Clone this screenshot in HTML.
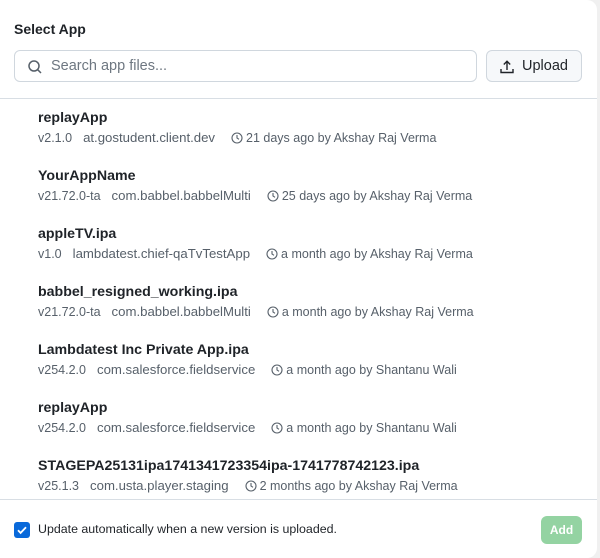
<!DOCTYPE html>
<html><head><style>
*{box-sizing:border-box;margin:0;padding:0}
body{width:600px;height:558px;background:#f0f0f0;font-family:"Liberation Sans",Arial,sans-serif;overflow:hidden}
.card{position:absolute;left:0;top:0;width:597px;height:558px;background:#fff;border-radius:0 10px 10px 0}
.title{position:absolute;left:14px;top:21px;font-size:14px;font-weight:bold;color:#1f2328}
.search{position:absolute;left:14px;top:50px;width:463px;height:32px;border:1px solid #d0d7de;border-radius:6px}
.search span{position:absolute;left:36px;top:7px;font-size:14.5px;color:#6e7781}
.search svg{position:absolute;left:12px;top:8px}
.up{position:absolute;left:486px;top:50px;width:96px;height:32px;border:1px solid #d0d7de;border-radius:6px;background:#f6f8fa;font-size:14.5px;color:#1f2328}
.up span{position:absolute;left:35px;top:7px}
.up svg{position:absolute;left:12px;top:8px}
.hr{position:absolute;left:0;width:597px;height:1px;background:#d8dee4}
.item{position:absolute;left:38px}
.item b{display:block;font-size:14.2px;color:#1f2328;font-weight:bold;line-height:17px}
.meta{margin-top:4px;font-size:12.5px;color:#57606a;white-space:nowrap;line-height:14px;display:flex;align-items:center}
.meta i{font-style:normal;margin-right:11px}
.meta i+i{margin-right:16px;font-size:13.2px}
.meta svg{margin-right:3px}
.cb{position:absolute;left:14px;top:522px;width:16px;height:16px;background:#0969da;border-radius:3px}
.lbl{position:absolute;left:38px;top:522px;font-size:12.4px;color:#1f2328}
.add{position:absolute;left:541px;top:516px;width:41px;height:28px;background:#94d3a2;border-radius:6px;color:#fff;font-size:12px;font-weight:bold;text-align:center;line-height:28px}
</style></head><body><div class="card">
<div class="title">Select App</div>
<div class="search"><svg width="16" height="16" viewBox="0 0 16 16" fill="none" stroke="#57606a" stroke-width="1.5"><circle cx="7" cy="7" r="5"/><path d="M10.7 10.7L14 14"/></svg><span>Search app files...</span></div>
<div class="up"><svg width="16" height="16" viewBox="0 0 16 16" fill="none" stroke="#1f2328" stroke-width="1.4"><path d="M2 10v3.5h12V10M8 11V2.5M4.8 5.5L8 2.3l3.2 3.2"/></svg><span>Upload</span></div>
<div class="hr" style="top:98px"></div>

<div class="item" style="top:110px"><b>replayApp</b><div class="meta"><i>v2.1.0</i><i>at.gostudent.client.dev</i><svg width="12" height="12" viewBox="0 0 12 12" fill="none" stroke="#57606a" stroke-width="1.1"><circle cx="6" cy="6" r="5"/><path d="M6 3v3l2 1.3"/></svg>21 days ago by Akshay Raj Verma</div></div>
<div class="item" style="top:168px"><b>YourAppName</b><div class="meta"><i>v21.72.0-ta</i><i>com.babbel.babbelMulti</i><svg width="12" height="12" viewBox="0 0 12 12" fill="none" stroke="#57606a" stroke-width="1.1"><circle cx="6" cy="6" r="5"/><path d="M6 3v3l2 1.3"/></svg>25 days ago by Akshay Raj Verma</div></div>
<div class="item" style="top:226px"><b>appleTV.ipa</b><div class="meta"><i>v1.0</i><i>lambdatest.chief-qaTvTestApp</i><svg width="12" height="12" viewBox="0 0 12 12" fill="none" stroke="#57606a" stroke-width="1.1"><circle cx="6" cy="6" r="5"/><path d="M6 3v3l2 1.3"/></svg>a month ago by Akshay Raj Verma</div></div>
<div class="item" style="top:284px"><b>babbel_resigned_working.ipa</b><div class="meta"><i>v21.72.0-ta</i><i>com.babbel.babbelMulti</i><svg width="12" height="12" viewBox="0 0 12 12" fill="none" stroke="#57606a" stroke-width="1.1"><circle cx="6" cy="6" r="5"/><path d="M6 3v3l2 1.3"/></svg>a month ago by Akshay Raj Verma</div></div>
<div class="item" style="top:342px"><b>Lambdatest Inc Private App.ipa</b><div class="meta"><i>v254.2.0</i><i>com.salesforce.fieldservice</i><svg width="12" height="12" viewBox="0 0 12 12" fill="none" stroke="#57606a" stroke-width="1.1"><circle cx="6" cy="6" r="5"/><path d="M6 3v3l2 1.3"/></svg>a month ago by Shantanu Wali</div></div>
<div class="item" style="top:400px"><b>replayApp</b><div class="meta"><i>v254.2.0</i><i>com.salesforce.fieldservice</i><svg width="12" height="12" viewBox="0 0 12 12" fill="none" stroke="#57606a" stroke-width="1.1"><circle cx="6" cy="6" r="5"/><path d="M6 3v3l2 1.3"/></svg>a month ago by Shantanu Wali</div></div>
<div class="item" style="top:458px"><b>STAGEPA25131ipa1741341723354ipa-1741778742123.ipa</b><div class="meta"><i>v25.1.3</i><i>com.usta.player.staging</i><svg width="12" height="12" viewBox="0 0 12 12" fill="none" stroke="#57606a" stroke-width="1.1"><circle cx="6" cy="6" r="5"/><path d="M6 3v3l2 1.3"/></svg>2 months ago by Akshay Raj Verma</div></div>

<div class="hr" style="top:499px"></div>
<div class="cb"><svg width="16" height="16" viewBox="0 0 16 16" fill="none" stroke="#fff" stroke-width="1.8"><path d="M4 8.3l2.6 2.6L12 5.2"/></svg></div>
<div class="lbl">Update automatically when a new version is uploaded.</div>
<div class="add">Add</div>
</div></body></html>
